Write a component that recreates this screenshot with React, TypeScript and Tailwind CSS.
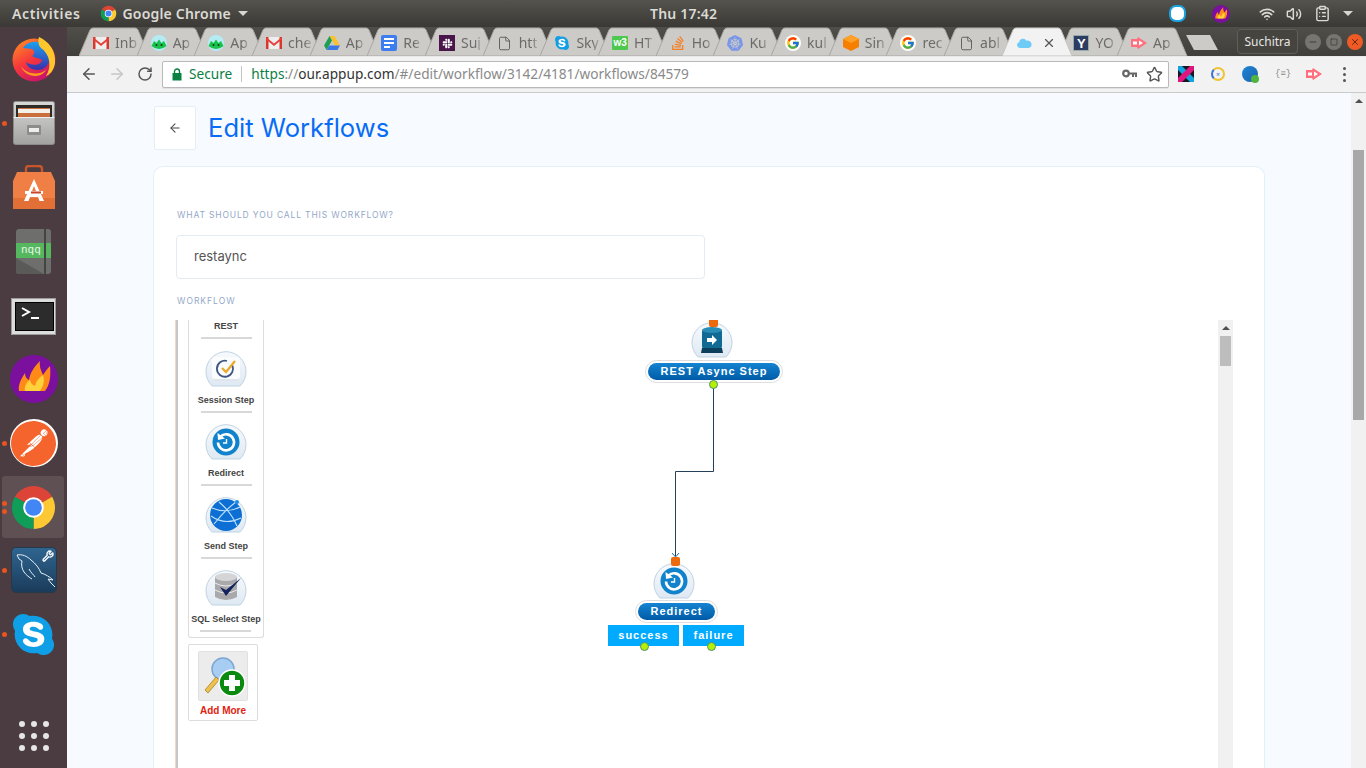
import React from "react";
import { ArrowLeft, ArrowRight, RotateCw, Star, X, Minus, Square, File as FileIcon, Wifi, Volume2, ClipboardList, Wrench } from "lucide-react";
import { SiPostman, SiKubernetes } from "react-icons/si";
import { FaSkype, FaSlack, FaStackOverflow } from "react-icons/fa";
import { FcGoogle } from "react-icons/fc";

const ui = "font-['Noto_Sans','Open_Sans',sans-serif]";

function Chrome({ s = 48 }: { s?: number }) {
  return (
    <svg width={s} height={s} viewBox="0 0 48 48">
      <path d="M24 24 L5 13 A22 22 0 0 1 43 13 Z" fill="#db4437" />
      <path d="M24 24 L43 13 A22 22 0 0 1 24 46 Z" fill="#fcc934" />
      <path d="M24 24 L24 46 A22 22 0 0 1 5 13 Z" fill="#0f9d58" />
      <circle cx="24" cy="24" r="10.5" fill="#fff" />
      <circle cx="24" cy="24" r="8.5" fill="#4285f4" />
    </svg>
  );
}

function Firefox() {
  return (
    <svg width="46" height="46" viewBox="0 0 46 46">
      <defs>
        <linearGradient id="ffg" x1="0" y1="0" x2="0.6" y2="1">
          <stop offset="0" stopColor="#ff9a1f" />
          <stop offset="0.55" stopColor="#f6373c" />
          <stop offset="1" stopColor="#c9156a" />
        </linearGradient>
        <linearGradient id="ffb" x1="0" y1="0" x2="0" y2="1">
          <stop offset="0" stopColor="#1b9ff0" />
          <stop offset="1" stopColor="#3b2fa8" />
        </linearGradient>
      </defs>
      <circle cx="23" cy="24" r="21.5" fill="url(#ffg)" />
      <path d="M12 12 C18 3 32 4 38 13 C42 22 37 34 27 34 C19 34 16 30 15 26 C20 30 30 30 31 24 C28 22 24 22 21 20 C24 18 24 15 21 13 Z" fill="url(#ffb)" />
      <path d="M28 1 C37 5 45 14 44 27 C43 35 38 39 35 40 C41 31 39 18 30 12 C27 9 27 4 28 1 Z" fill="#ffc72c" />
      <path d="M10 30 C15 38 27 40 35 34 C30 43 14 42 10 30 Z" fill="#ff9a1f" />
    </svg>
  );
}

function Flame({ s = 48 }: { s?: number }) {
  return (
    <svg width={s} height={s} viewBox="0 0 48 48">
      <circle cx="24" cy="24" r="24" fill="#7b0f9e" />
      <path d="M9 36 C8 30 11 24 15 18 C15 22 17 24 19 25 C20 18 24 12 30 6 C29 13 32 17 33 20 C35 17 37 14 40 11 C41 21 40 30 35 36 Z" fill="#ff8a18" />
      <path d="M15 36 C14 31 17 27 20 25 C21 29 23 30 25 31 C26 26 29 23 33 20 C35 27 33 32 30 36 Z" fill="#ffd23c" />
    </svg>
  );
}

function Cabinet() {
  return (
    <svg width="42" height="44" viewBox="0 0 42 44">
      <defs>
        <linearGradient id="cab" x1="0" y1="0" x2="0" y2="1">
          <stop offset="0" stopColor="#d8d8d6" />
          <stop offset="1" stopColor="#a2a2a0" />
        </linearGradient>
      </defs>
      <rect x="0.5" y="0.5" width="41" height="43" rx="2" fill="url(#cab)" stroke="#8b8b89" />
      <rect x="3" y="4" width="36" height="13" fill="#2d2b28" />
      <rect x="5" y="7" width="32" height="10" fill="#c96f3c" />
      <rect x="5" y="8" width="32" height="4" fill="#f4f0ea" />
      <rect x="0.5" y="16" width="41" height="1" fill="#efefed" />
      <rect x="14" y="24" width="14" height="10" rx="1" fill="#8c8c8a" />
      <rect x="16" y="27" width="10" height="4" fill="#eeeeec" />
    </svg>
  );
}

function StoreBag() {
  return (
    <svg width="42" height="44" viewBox="0 0 42 44">
      <path d="M13 12 V4 Q13 1 16 1 H26 Q29 1 29 4 V12" fill="none" stroke="#c8562a" strokeWidth="2.4" />
      <path d="M4 7 H38 L42 16 V44 H0 V16 Z" fill="#ef7f45" />
      <rect x="0" y="33" width="42" height="11" fill="#e26f36" />
      <path d="M21 14 L11 36 H15.5 L17 32 H25 L26.5 36 H31 Z M19 26 L21 21 L23 26 Z" fill="#fff" />
      <rect x="12" y="26" width="18" height="3" fill="#fff" />
      <rect x="18" y="26.5" width="10" height="2" fill="#c8462a" />
    </svg>
  );
}

function Notebook() {
  return (
    <div className="relative w-[35px] h-[45px] rounded-[3px] bg-[#6e6e6c] overflow-hidden">
      <div className="absolute left-0 top-[14px] w-full h-[15px] bg-[#55b85f] flex items-center pl-[5px]">
        <span className="text-[11px] leading-none text-[#e9f5ea] font-['Liberation_Mono',monospace]">nqq</span>
      </div>
      <div className="absolute right-[5px] top-0 w-[2px] h-full bg-[#444442]" />
      <div className="absolute left-0 bottom-0 w-0 h-0 border-l-[28px] border-l-[#5a5a58] border-t-[16px] border-t-transparent" />
    </div>
  );
}

function Terminal() {
  return (
    <div className="w-[45px] h-[37px] bg-[#dcdcdc] border border-[#9c9c9c] p-[3px] flex">
      <div className="flex-1 bg-[#2c2c2c] border border-black">
        <svg width="37" height="29" viewBox="0 0 37 29">
          <path d="M6 5 L13 9 L6 13" fill="none" stroke="#fff" strokeWidth="2" />
          <rect x="15" y="14" width="8" height="2" fill="#fff" />
        </svg>
      </div>
    </div>
  );
}

function Postman() {
  return (
    <div className="w-[48px] h-[48px] rounded-full bg-white flex items-center justify-center">
      <SiPostman size={45} className="text-[#f4642c]" />
    </div>
  );
}

function Mysql() {
  return (
    <div className="relative w-[46px] h-[46px] rounded-[5px] border border-[#27384a] bg-gradient-to-b from-[#2f6590] to-[#1b3c5b]">
      <svg width="44" height="44" viewBox="0 0 44 44" className="absolute left-0 top-0">
        <path
          d="M5 7 C10 6 15 8 19 12 C24 16 27 20 29 25 C33 26 38 29 41 32 L36 31 L39 35 L43 39 M5 7 L7 11 L10 13 C9 17 10 21 12 24 C14 27 18 30 20 31 M17 21 C19 25 22 27 23 29"
          fill="none"
          stroke="#e6eff6"
          strokeWidth="1"
        />
      </svg>
      <Wrench size={12} strokeWidth={2.6} className="absolute right-[2px] top-[2px] text-white" />
    </div>
  );
}

function Skype({ s, dot }: { s: number; dot: number }) {
  return (
    <div className="relative flex items-center justify-center" style={{ width: s, height: s }}>
      <div className="absolute rounded-full bg-white" style={{ width: dot, height: dot }} />
      <FaSkype size={s} className="relative text-[#0f9fe6]" />
    </div>
  );
}

function DockItem({ dots = 0, active = false, h, children }: { dots?: number; active?: boolean; h: number; children: React.ReactNode }) {
  return (
    <div className="relative flex items-center justify-center w-[67px] shrink-0" style={{ height: h }}>
      {active && <div className="absolute left-[2px] right-[3px] top-0 bottom-0 rounded-[3px] bg-[#5f5054]" />}
      {dots > 0 && (
        <div className="absolute left-[2px] top-0 bottom-0 flex flex-col justify-center gap-[3px]">
          {Array.from({ length: dots }).map((_, i) => (
            <div key={i} className="w-[5px] h-[5px] rounded-full bg-[#e9541f]" />
          ))}
        </div>
      )}
      <div className="relative">{children}</div>
    </div>
  );
}

function Dock() {
  return (
    <div className="w-[67px] shrink-0 h-full bg-[#4b3c41] flex flex-col items-center pt-[9px]">
      <DockItem h={46}><Firefox /></DockItem>
      <div className="h-[19px] shrink-0" />
      <DockItem h={44} dots={1}><Cabinet /></DockItem>
      <div className="h-[19px] shrink-0" />
      <DockItem h={46}><StoreBag /></DockItem>
      <div className="h-[18px] shrink-0" />
      <DockItem h={46}><Notebook /></DockItem>
      <div className="h-[24px] shrink-0" />
      <DockItem h={37}><Terminal /></DockItem>
      <div className="h-[20px] shrink-0" />
      <DockItem h={48}><Flame /></DockItem>
      <div className="h-[16px] shrink-0" />
      <DockItem h={48} dots={1}><Postman /></DockItem>
      <div className="h-[9px] shrink-0" />
      <DockItem h={62} dots={2} active><Chrome s={47} /></DockItem>
      <div className="h-[9px] shrink-0" />
      <DockItem h={46} dots={1}><Mysql /></DockItem>
      <div className="h-[18px] shrink-0" />
      <DockItem h={46} dots={1}><Skype s={47} dot={30} /></DockItem>
      <div className="flex-1" />
      <div className="grid grid-cols-3 gap-x-[6px] gap-y-[6px] mb-[17px]">
        {Array.from({ length: 9 }).map((_, i) => (
          <div key={i} className="w-[6px] h-[6px] rounded-full bg-[#e6e6e6]" />
        ))}
      </div>
    </div>
  );
}

function TopBar() {
  return (
    <div className={`h-[27px] shrink-0 bg-gradient-to-b from-[#55534d] to-[#3a3935] flex items-center relative text-[#dcdad5] text-[14px] font-medium ${ui}`}>
      <span className="ml-[12px] tracking-[0.6px] font-semibold">Activities</span>
      <span className="ml-[20px]"><Chrome s={17} /></span>
      <span className="ml-[5px] font-semibold tracking-[0.2px]">Google Chrome</span>
      <span className="ml-[7px] w-0 h-0 border-l-[5px] border-r-[5px] border-t-[5px] border-l-transparent border-r-transparent border-t-[#d8d6d1]" />
      <span className="absolute left-[650px] top-[3px] font-semibold tracking-[0.2px]">Thu 17:42</span>
      <div className="ml-auto flex items-center">
        <span className="mr-[26px]"><div className="w-[17px] h-[17px] rounded-[7px] bg-white border-2 border-[#1aa3de]" /></span>
        <span className="mr-[29px]"><Flame s={18} /></span>
        <Wifi size={16} className="mr-[11px]" strokeWidth={2.4} />
        <Volume2 size={16} className="mr-[12px]" strokeWidth={2.2} />
        <ClipboardList size={17} className="mr-[12px]" strokeWidth={2} />
        <span className="mr-[13px] w-0 h-0 border-l-[5px] border-r-[5px] border-t-[5px] border-l-transparent border-r-transparent border-t-[#d8d6d1]" />
      </div>
    </div>
  );
}

function Gmail() {
  return (
    <svg width="16" height="12" viewBox="0 0 16 12">
      <rect width="16" height="12" fill="#eee" />
      <path d="M0 0 H2.5 V12 H0 Z M13.5 0 H16 V12 H13.5 Z" fill="#d9372c" />
      <path d="M0 0 L8 6.5 L16 0 V2.5 L8 9 L0 2.5 Z" fill="#e5403a" />
    </svg>
  );
}
function Alien() {
  return (
    <svg width="16" height="16" viewBox="0 0 16 16">
      <circle cx="8" cy="8" r="8" fill="#b4ecf4" />
      <path d="M0.5 11 L3 6 L5.5 8 L8 4.5 L10.5 8 L13 6 L15.5 11 Q12 14 8 14 Q4 14 0.5 11 Z" fill="#19c24b" />
      <circle cx="5.5" cy="10" r="1" fill="#0a3a18" />
      <circle cx="10.5" cy="10" r="1" fill="#0a3a18" />
    </svg>
  );
}
function Drive() {
  return (
    <svg width="16" height="14" viewBox="0 0 16 14">
      <path d="M5.5 0 H10.5 L16 9.5 H11 Z" fill="#fbc02d" />
      <path d="M5.5 0 L8 4.5 L2.6 14 L0 9.5 Z" fill="#1e9f54" />
      <path d="M2.6 14 L5.3 9.5 H16 L13.4 14 Z" fill="#3a78e7" />
    </svg>
  );
}
function Docs() {
  return (
    <div className="w-[16px] h-[16px] rounded-[2px] bg-[#3e7df0] flex flex-col justify-center gap-[2px] pl-[3px]">
      <div className="w-[10px] h-[2px] bg-white" />
      <div className="w-[10px] h-[2px] bg-white" />
      <div className="w-[6px] h-[2px] bg-white" />
    </div>
  );
}
function W3() {
  return (
    <div className="w-[16px] h-[14px] rounded-[1px] bg-[#4cc94e] flex items-center justify-center text-white text-[10px] leading-none font-bold font-['Liberation_Sans',sans-serif]">w3</div>
  );
}
function Cube() {
  return (
    <svg width="16" height="16" viewBox="0 0 16 16">
      <path d="M8 0 L16 4 V12 L8 16 L0 12 V4 Z" fill="#f77f00" />
      <path d="M8 0 L16 4 L8 8 L0 4 Z" fill="#ffa126" />
    </svg>
  );
}
function Cloud({ c = "#6ecbf5", w = 16 }: { c?: string; w?: number }) {
  return (
    <svg width={w} height={w * 0.62} viewBox="0 0 16 10">
      <path d="M3.5 10 A3 3 0 0 1 3 4.2 A4 4 0 0 1 10.5 2.8 A3.6 3.6 0 0 1 13 10 Z" fill={c} />
    </svg>
  );
}
function YBox() {
  return (
    <div className="w-[16px] h-[16px] bg-[#2d3c63] border border-[#9aa] flex items-center justify-center text-white text-[13px] leading-none font-bold font-['Liberation_Sans',sans-serif]">Y</div>
  );
}
function AppIcon({ s = 16 }: { s?: number }) {
  return (
    <svg width={s} height={s * 0.75} viewBox="0 0 16 12">
      <path d="M0 2 H6 L7 0 L16 6 L7 12 L6 10 H0 Z" fill="#ff6f7d" />
      <path d="M8 3.5 L12 6 L8 8.5 Z M2 4.5 H6 V7.5 H2 Z" fill="#fff" />
    </svg>
  );
}
function Goog() {
  return (
    <span className="w-[16px] h-[16px] rounded-full bg-white flex items-center justify-center">
      <FcGoogle size={14} />
    </span>
  );
}
function Slack() {
  return (
    <span className="w-[16px] h-[16px] bg-[#4a154b] flex items-center justify-center">
      <FaSlack size={11} className="text-white" />
    </span>
  );
}

const tabs: [React.ReactNode, string][] = [
  [<Gmail />, "Inb"],
  [<Alien />, "Ap"],
  [<Alien />, "Ap"],
  [<Gmail />, "che"],
  [<Drive />, "Ap"],
  [<Docs />, "Re"],
  [<Slack />, "Suj"],
  [<FileIcon size={15} strokeWidth={1.4} className="text-[#555]" />, "htt"],
  [<Skype s={16} dot={9} />, "Sky"],
  [<W3 />, "HT"],
  [<FaStackOverflow size={16} className="text-[#f48024]" />, "Ho"],
  [<SiKubernetes size={16} className="text-[#7a96e8]" />, "Ku"],
  [<Goog />, "kul"],
  [<Cube />, "Sin"],
  [<Goog />, "rec"],
  [<FileIcon size={15} strokeWidth={1.4} className="text-[#555]" />, "abl"],
  [<Cloud />, ""],
  [<YBox />, "YO"],
  [<AppIcon />, "Ap"],
];

function Tab({ icon, title, active }: { icon: React.ReactNode; title: string; active?: boolean }) {
  return (
    <div className={`relative w-[72px] h-[29px] shrink-0 -mr-[14.33px] ${active ? "z-10" : ""}`}>
      <svg className="absolute inset-0" width="72" height="29" viewBox="0 0 72 29">
        <path
          d="M0 29 L11 3 Q12 1 14 1 H56 Q58 1 59 3 L70 29 Z"
          fill={active ? "#f2f2f2" : "#cdcbc8"}
          stroke={active ? "#c4c4c2" : "#a8a7a3"}
          strokeWidth="1"
        />
      </svg>
      <div className={`relative h-full flex items-center pl-[14px] pt-[3px] ${ui}`}>
        <span className="w-[16px] h-[16px] flex items-center justify-center shrink-0">{icon}</span>
        {active ? (
          <X size={14} className="ml-[10px] text-[#555]" />
        ) : (
          <span className="ml-[6px] whitespace-nowrap text-[14px] leading-none text-[#6c6b69] [mask-image:linear-gradient(to_right,black_70%,rgba(0,0,0,0.35))]">
            {title}
          </span>
        )}
      </div>
    </div>
  );
}

function TabStrip() {
  return (
    <div className="h-[29px] shrink-0 bg-gradient-to-b from-[#4f4e48] to-[#403f3b] flex items-center relative">
      <div className="flex pl-[12px] items-end h-full">
        {tabs.map(([ic, t], i) => (
          <Tab key={i} icon={ic} title={t} active={i === 16} />
        ))}
        <svg className="ml-[11px] mb-[6px] shrink-0" width="33" height="15" viewBox="0 0 33 15">
          <path d="M0 0 H24 L32 15 H8 Z" fill="#cdcbc8" />
        </svg>
      </div>
      <div className="ml-auto flex items-center mr-[3px]">
        <div className={`w-[61px] h-[25px] rounded-[4px] border border-[#5f5e59] bg-[#45443f] flex items-center justify-center text-[#e7e6e2] text-[12px] ${ui}`}>Suchitra</div>
        <div className="ml-[7px] flex gap-[5px]">
          <div className="w-[16px] h-[16px] rounded-full bg-[#77756f] flex items-center justify-center"><Minus size={10} className="text-[#35342f]" /></div>
          <div className="w-[16px] h-[16px] rounded-full bg-[#77756f] flex items-center justify-center"><Square size={8} className="text-[#35342f]" /></div>
          <div className="w-[16px] h-[16px] rounded-full bg-[#ef5a25] flex items-center justify-center"><X size={10} className="text-[#4a2010]" /></div>
        </div>
      </div>
    </div>
  );
}

function Toolbar() {
  return (
    <div className={`h-[37px] shrink-0 pb-[1px] bg-[#f2f2f2] border-b border-[#cacaca] border-t border-t-[#e8e8e8] flex items-center ${ui}`}>
      <ArrowLeft size={18} className="ml-[13px] text-[#555]" strokeWidth={2} />
      <ArrowRight size={18} className="ml-[10px] text-[#c6c6c6]" strokeWidth={2} />
      <RotateCw size={16} className="ml-[11px] text-[#555]" strokeWidth={2.2} />
      <div className="ml-[9px] w-[1007px] h-[27px] bg-white border border-[#b9b9b9] rounded-[2px] flex items-center text-[13.65px] shadow-[0_1px_0_#e2e2e2]">
        <svg className="ml-[9px]" width="10" height="13" viewBox="0 0 10 13">
          <path d="M2.5 5 V3.5 A2.5 2.5 0 0 1 7.5 3.5 V5" fill="none" stroke="#0b8043" strokeWidth="1.4" />
          <rect x="0.5" y="5" width="9" height="7.5" fill="#0b8043" />
        </svg>
        <span className="ml-[7px] text-[#0b8043]">Secure</span>
        <span className="ml-[9px] w-px h-[16px] bg-[#c4c4c4]" />
        <span className="ml-[9px] whitespace-nowrap">
          <span className="text-[#0b8043]">https</span>
          <span className="text-[#8a8a8a]">://</span>
          <span className="text-[#333]">our.appup.com</span>
          <span className="text-[#8a8a8a]">/#/edit/workflow/3142/4181/workflows/84579</span>
        </span>
        <svg className="ml-auto mr-[9px]" width="15" height="10" viewBox="0 0 15 10">
          <circle cx="4" cy="4.5" r="2.8" fill="none" stroke="#666" strokeWidth="2.2" />
          <path d="M7 4.5 H15 M11 4.5 V8 M14 4.5 V8" fill="none" stroke="#666" strokeWidth="2" />
        </svg>
        <Star size={17} className="mr-[5px] text-[#555]" strokeWidth={2} />
      </div>
      <div className="ml-[9px] flex items-center">
        <svg width="16" height="16" viewBox="0 0 16 16">
          <rect width="16" height="16" fill="#161626" />
          <path d="M0 0 L4 0 L16 12 L16 16 L12 16 L0 4 Z" fill="#12a4de" />
          <path d="M12 0 L16 0 L16 4 L4 16 L0 16 L0 12 Z" fill="#e0167e" />
        </svg>
        <div className="ml-[17px] w-[14px] h-[14px] rounded-full border-2 border-[#f0c330] border-l-[#3b6fd6] flex items-center justify-center text-[7px] leading-none text-[#3b6fd6]">×</div>
        <div className="ml-[17px] w-[16px] h-[16px] rounded-full bg-gradient-to-br from-[#1b87d8] to-[#1e5fa8] relative">
          <div className="absolute -right-[1px] -bottom-[1px] w-[8px] h-[8px] rounded-full bg-[#4fb33e]" />
        </div>
        <span className="ml-[17px] text-[9px] leading-none text-[#888] w-[15px] font-['Liberation_Mono',monospace] whitespace-nowrap">{"{≡}"}</span>
        <span className="ml-[16px] flex"><AppIcon s={16} /></span>
        <div className="ml-[21px] flex flex-col gap-[3px]">
          <div className="w-[3px] h-[3px] rounded-full bg-[#555]" />
          <div className="w-[3px] h-[3px] rounded-full bg-[#555]" />
          <div className="w-[3px] h-[3px] rounded-full bg-[#555]" />
        </div>
      </div>
    </div>
  );
}

function Dome({ children }: { children?: React.ReactNode }) {
  return (
    <svg width="42" height="37" viewBox="0 0 42 37" className="block">
      <defs>
        <linearGradient id="dome" x1="0" y1="0" x2="0" y2="1">
          <stop offset="0" stopColor="#f7fafd" />
          <stop offset="1" stopColor="#dfe9f3" />
        </linearGradient>
      </defs>
      <path d="M7 36 A20 20 0 1 1 35 36 Z" fill="url(#dome)" stroke="#bfd3e2" strokeWidth="1" />
      {children}
    </svg>
  );
}

const RedirectGlyph = () => (
  <>
    <circle cx="21" cy="19" r="13.5" fill="#1182cc" />
    <path d="M15.5 13.5 A8 8 0 1 1 13 19.5" fill="none" stroke="#fff" strokeWidth="2.6" />
    <path d="M12.5 10 L13 17 L20 15.5 Z" fill="#fff" />
    <path d="M21.5 16 V20 H18" fill="none" stroke="#fff" strokeWidth="1.4" />
  </>
);
const SessionGlyph = () => (
  <>
    <rect x="7" y="7" width="28" height="22" rx="3" fill="#fbfcfe" />
    <path d="M27 15 A8 8 0 1 1 22 11" fill="none" stroke="#3d5685" strokeWidth="1.8" />
    <path d="M17 18 L21 22 L30 11" fill="none" stroke="#eaa92a" strokeWidth="2.2" />
    <rect x="9" y="29" width="24" height="2" fill="#dfe6ee" />
  </>
);
const SendGlyph = () => (
  <>
    <circle cx="21" cy="19" r="16" fill="#0d6fd3" />
    <path d="M7 12 Q21 18 35 11 M9 28 Q20 14 31 6 M14 6 Q26 16 32 30 M6 20 Q20 30 36 22" fill="none" stroke="#bfe3ff" strokeWidth="1.1" />
    <circle cx="32" cy="6" r="2" fill="#1f8ae8" />
  </>
);
const SqlGlyph = () => (
  <>
    <path d="M10 8 Q21 2 32 8 V28 Q21 34 10 28 Z" fill="#a9a9ab" />
    <ellipse cx="21" cy="8" rx="11" ry="4" fill="#d5d5d7" />
    <path d="M10 14 Q21 20 32 14 M10 21 Q21 27 32 21" fill="none" stroke="#e9e9ea" strokeWidth="1" />
    <path d="M15 18 L21 27 L36 9 L21 21 Z" fill="#14235c" />
  </>
);

function Divider() {
  return <div className="w-[51px] h-[2px] bg-[#d8d8d8] shrink-0" />;
}
const pLabel = "text-[9px] font-bold text-[#444] leading-none whitespace-nowrap font-['Liberation_Sans',sans-serif]";

function PaletteItem({ glyph, label }: { glyph: React.ReactNode; label: string }) {
  return (
    <div className="flex flex-col items-center h-[73px] shrink-0 pt-[9px]">
      <Dome>{glyph}</Dome>
      <div className={`${pLabel} mt-[9px]`}>{label}</div>
      <div className="mt-[6px]"><Divider /></div>
    </div>
  );
}

function Palette() {
  return (
    <div className="w-[76px] ml-[10px] shrink-0 flex flex-col gap-[6px]">
      <div className="border-x border-b border-[#dcdcdc] rounded-b-[3px] h-[318px] flex flex-col items-center">
        <div className={`${pLabel} mt-[2px]`}>REST</div>
        <div className="mt-[6px] mb-[2px]"><Divider /></div>
        <PaletteItem glyph={<SessionGlyph />} label="Session Step" />
        <PaletteItem glyph={<RedirectGlyph />} label="Redirect" />
        <PaletteItem glyph={<SendGlyph />} label="Send Step" />
        <PaletteItem glyph={<SqlGlyph />} label="SQL Select Step" />
      </div>
      <div className="w-[70px] h-[77px] border border-[#dcdcdc] rounded-[2px] flex flex-col items-center pt-[6px]">
        <div className="w-[50px] h-[50px] bg-[#ececec] border border-[#e0e0e0] rounded-[2px]">
          <svg width="48" height="48" viewBox="0 0 48 48">
            <circle cx="24" cy="17" r="11" fill="#a8cdf2" stroke="#7ea6d0" strokeWidth="1.5" />
            <path d="M6 38 L17 25 L20 28 L9 41 Z" fill="#eec04e" stroke="#a6842c" strokeWidth="0.8" />
            <circle cx="33" cy="31" r="13" fill="#0a8a0e" stroke="#fff" strokeWidth="1.5" />
            <path d="M30 23 H36 V28 H41 V34 H36 V39 H30 V34 H25 V28 H30 Z" fill="#fff" />
          </svg>
        </div>
        <div className="mt-[5px] text-[10px] font-bold text-[#e2230f] leading-none whitespace-nowrap font-['Liberation_Sans',sans-serif]">Add More</div>
      </div>
    </div>
  );
}

function Port({ x, y, c }: { x: number; y: number; c: "o" | "g" }) {
  return (
    <div
      className={`absolute w-[9px] h-[9px] ${c === "o" ? "bg-[#ef6a0c] rounded-[2px]" : "bg-[#b4f000] border border-[#4f8f7a] rounded-full"}`}
      style={{ left: x - 4.5, top: y - 4.5 }}
    />
  );
}

function Pill({ x, y, w, text }: { x: number; y: number; w: number; text: string }) {
  return (
    <div
      className="absolute h-[23px] rounded-full border border-[#dedede] bg-white p-[2px]"
      style={{ left: x, top: y, width: w }}
    >
      <div className="h-full rounded-full bg-gradient-to-b from-[#1584d2] to-[#015ba6] flex items-center justify-center text-white text-[11px] font-bold tracking-[1px] leading-none whitespace-nowrap font-['Liberation_Sans',sans-serif]">
        {text}
      </div>
    </div>
  );
}

function Outcome({ x, w, text }: { x: number; w: number; text: string }) {
  return (
    <div
      className="absolute top-[305px] h-[21px] bg-[#00aaff] flex items-center justify-center text-white text-[11px] font-bold tracking-[1px] leading-none font-['Liberation_Sans',sans-serif]"
      style={{ left: x, width: w }}
    >
      {text}
    </div>
  );
}

function FlowCanvas() {
  return (
    <div className="relative flex-1 overflow-hidden">
      <svg className="absolute inset-0" width="954" height="448">
        <path d="M449.5 66 V151.5 H411.5 V236" fill="none" stroke="#24405a" strokeWidth="1" />
        <path d="M408 233 L411.5 237 L415 233" fill="none" stroke="#1a6fa8" strokeWidth="1" />
      </svg>
      <div className="absolute left-[427px] top-[1px]">
        <Dome>
          <rect x="11" y="8" width="20" height="20" rx="3" fill="#116a94" />
          <ellipse cx="21" cy="9" rx="10" ry="3" fill="#2a8db8" />
          <path d="M11 27 H31 L32 32 H10 Z" fill="#0c3f5c" />
          <path d="M16 17 H21 V14 L26 19 L21 24 V21 H16 Z" fill="#fff" />
        </Dome>
      </div>
      <Port x={449.5} y={2} c="o" />
      <Pill x={381} y={40} w={138} text="REST Async Step" />
      <Port x={449.5} y={64} c="g" />

      <div className="absolute left-[389px] top-[242px]">
        <Dome><RedirectGlyph /></Dome>
      </div>
      <Port x={411.5} y={241} c="o" />
      <Pill x={371} y={280} w={83} text="Redirect" />
      <Outcome x={344} w={71} text="success" />
      <Outcome x={419} w={61} text="failure" />
      <Port x={380.5} y={326} c="g" />
      <Port x={447.5} y={326} c="g" />
    </div>
  );
}

function InnerScrollbar() {
  return (
    <div className="w-[15px] shrink-0 bg-[#f1f1f1] flex flex-col items-center">
      <div className="mt-[6px] w-0 h-0 border-l-[4px] border-r-[4px] border-b-[4px] border-l-transparent border-r-transparent border-b-[#505050]" />
      <div className="mt-[6px] w-[11px] h-[30px] bg-[#bdbdbd]" />
    </div>
  );
}

function Page() {
  return (
    <div className="flex-1 min-h-0 flex bg-[#f7fbff] font-['Inter',sans-serif]">
      <div className="flex-1 min-w-0 flex flex-col pl-[86px] pr-[86px] pt-[13px] overflow-hidden">
        <div className="flex items-center shrink-0 h-[44px] pl-px">
          <div className="w-[42px] h-[44px] bg-white border border-[#e6edf5] rounded-[2px] flex items-center justify-center">
            <ArrowLeft size={14} className="text-[#444]" strokeWidth={1.8} />
          </div>
          <h1 className="ml-[12px] text-[25.6px] leading-none font-normal text-[#0a6cf5]">Edit Workflows</h1>
        </div>
        <div className="mt-[16px] flex-1 min-h-0 bg-white border border-[#e3f0fb] rounded-t-[10px] border-b-0 pl-[22px] pr-[31px] overflow-hidden flex flex-col">
          <div className="mt-[43px] text-[8.5px] leading-[10px] tracking-[0.85px] text-[#94a8c8] whitespace-nowrap pl-[1px]">WHAT SHOULD YOU CALL THIS WORKFLOW?</div>
          <div className="mt-[15px] w-[529px] h-[44px] shrink-0 border border-[#e4eaf3] rounded-[4px] flex items-center pl-[17px] text-[13px] text-[#555]">restaync</div>
          <div className="mt-[17px] text-[8.5px] leading-[10px] tracking-[1px] text-[#94a8c8] pl-[1px]">WORKFLOW</div>
          <div className="mt-[14px] flex-1 min-h-0 flex">
            <div className="w-[2px] shrink-0 bg-[#c9c7c5] shadow-[-1px_0_0_#f4d6c4]" />
            <Palette />
            <FlowCanvas />
            <InnerScrollbar />
          </div>
        </div>
      </div>
      <div className="w-[15px] shrink-0 bg-[#f1f1f1] flex flex-col items-center">
        <div className="mt-[6px] w-0 h-0 border-l-[4px] border-r-[4px] border-b-[4px] border-l-transparent border-r-transparent border-b-[#505050]" />
        <div className="mt-[47px] w-[11px] h-[270px] bg-[#a8a8a8]" />
      </div>
    </div>
  );
}

export default function App() {
  return (
    <div className="w-[1366px] h-[768px] overflow-hidden flex flex-col">
      <TopBar />
      <div className="flex-1 min-h-0 flex">
        <Dock />
        <div className="flex-1 min-w-0 flex flex-col">
          <TabStrip />
          <Toolbar />
          <Page />
        </div>
      </div>
    </div>
  );
}
